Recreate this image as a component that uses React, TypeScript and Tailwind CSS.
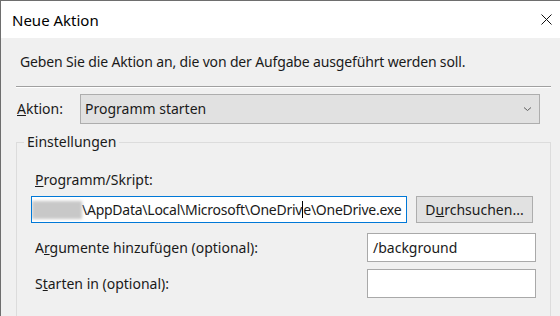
import React from 'react';

const font = { fontFamily: '"Noto Sans", "Open Sans", sans-serif' };

function Chevron() {
  return (
    <svg width="9" height="6" viewBox="0 0 9 6" className="text-[#606060]">
      <path d="M1 1.5 L4.5 4.5 L8 1.5" fill="none" stroke="currentColor" strokeWidth="1" />
    </svg>
  );
}

function CloseIcon() {
  return (
    <svg width="11" height="11" viewBox="0 0 11 11">
      <path d="M0.5 0.5 L10.5 10.5 M10.5 0.5 L0.5 10.5" stroke="#111" strokeWidth="1" />
    </svg>
  );
}

export default function App() {
  return (
    <div
      className="w-[560px] h-[316px] overflow-hidden bg-[#f0f0f0] border-l border-t border-[#6e6e6e] text-[14px] leading-[20px] text-[#1a1a1a]"
      style={font}
    >
      {/* title bar */}
      <div className="h-[37px] bg-white flex items-center justify-between pl-[11px] pr-[8px]">
        <span className="text-[15px] text-black">Neue Aktion</span>
        <CloseIcon />
      </div>

      <div className="mt-[14px] pl-[19px] tracking-[-0.15px]">
        Geben Sie die Aktion an, die von der Aufgabe ausgeführt werden soll.
      </div>

      {/* etched separator */}
      <div className="mt-[14px] ml-[15px] w-[535px] border-t border-b border-t-[#a0a0a0] border-b-white" />

      {/* Aktion */}
      <div className="mt-[6px] flex items-center">
        <span className="pl-[16px] w-[79px]">
          <u>A</u>ktion:
        </span>
        <div className="w-[460px] h-[30px] bg-[#e1e1e1] border border-[#adadad] flex items-center justify-between pl-[4px] pr-[7px]">
          <span>Programm starten</span>
          <Chevron />
        </div>
      </div>

      {/* Einstellungen group */}
      <fieldset className="mt-[8px] ml-[15px] w-[535px] h-[200px] border border-[#dcdcdc]">
        <legend className="ml-[7px] px-[3px]">Einstellungen</legend>
        <div className="pl-[14px] pr-[14px]">
          <div className="mt-[18px] pl-[4px]">
            <u>P</u>rogramm/Skript:
          </div>
          <div className="mt-[6px] flex items-center gap-[9px]">
            <div className="w-[376px] h-[27px] bg-white border border-[#0078d7] flex items-center overflow-hidden whitespace-nowrap tracking-[-0.25px]">
              <span className="inline-block w-[50px] h-[18px] bg-[#c8c8c8] blur-[1.5px] shrink-0" />
              <span className="shrink-0">\AppData\Local\Microsoft\OneDriv</span>
              <span className="inline-block w-px h-[17px] bg-black shrink-0" />
              <span className="shrink-0">e\OneDrive.exe</span>
            </div>
            <div className="w-[117px] h-[27px] bg-[#e1e1e1] border border-[#adadad] flex items-center justify-center">
              D<u>u</u>rchsuchen...
            </div>
          </div>
          <div className="mt-[10px] flex items-center justify-between">
            <span className="pl-[4px]">
              A<u>r</u>gumente hinzufügen (optional):
            </span>
            <div className="w-[169px] h-[29px] bg-white border border-[#a9a9a9] flex items-center pl-[5px]">
              /background
            </div>
          </div>
          <div className="mt-[7px] flex items-center justify-between">
            <span className="pl-[4px]">
              S<u>t</u>arten in (optional):
            </span>
            <div className="w-[169px] h-[29px] bg-white border border-[#a9a9a9]" />
          </div>
        </div>
      </fieldset>
    </div>
  );
}
